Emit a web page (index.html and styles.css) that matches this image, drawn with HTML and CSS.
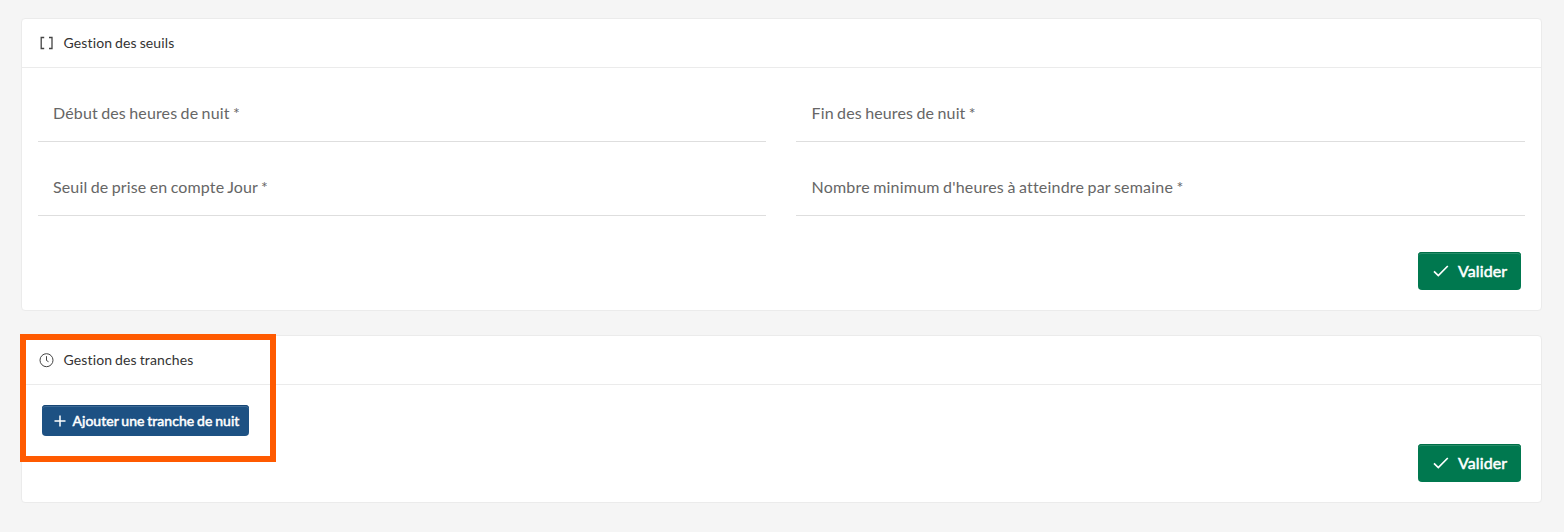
FILE: index.html
```html
<!DOCTYPE html>
<html lang="fr">
<head>
<meta charset="utf-8">
<title>Gestion des seuils</title>
<link rel="stylesheet" href="styles.css">
</head>
<body>
<main class="page">
  <section class="card card-thresholds">
    <header class="card-header">
      <svg class="icon" viewBox="0 0 15 15"><path d="M5.200 1.500H2.200v11h3M10 1.500h3v11h-3"/></svg>
      <span class="title">Gestion des seuils</span>
    </header>
    <div class="fields">
      <label class="field"><span class="field-label">Début des heures de nuit *</span></label>
      <label class="field"><span class="field-label">Fin des heures de nuit *</span></label>
      <label class="field"><span class="field-label">Seuil de prise en compte Jour *</span></label>
      <label class="field"><span class="field-label field-label-long">Nombre minimum d'heures à atteindre par semaine *</span></label>
    </div>
    <div class="actions">
      <button class="btn btn-validate"><svg class="check" viewBox="0 0 16 16"><path d="M1 8.300l4.300 4.200L14.800 3"/></svg><span>Valider</span></button>
    </div>
  </section>
  <section class="card card-ranges">
    <header class="card-header">
      <svg class="icon clock" viewBox="0 0 15 15"><circle cx="7.500" cy="7.200" r="6.500"/><path d="M7.500 3.200v4.300l2 1.200"/></svg>
      <span class="title">Gestion des tranches</span>
    </header>
    <div class="toolbar">
      <button class="btn btn-add"><svg class="plus" viewBox="0 0 12 12"><path d="M6 .5v11M.5 6h11"/></svg><span>Ajouter une tranche de nuit</span></button>
    </div>
    <div class="actions">
      <button class="btn btn-validate"><svg class="check" viewBox="0 0 16 16"><path d="M1 8.300l4.300 4.200L14.800 3"/></svg><span>Valider</span></button>
    </div>
    <div class="highlight"></div>
  </section>
</main>
</body>
</html>
```
FILE: styles.css
```css
* { box-sizing: border-box; }
body {
  margin: 0;
  background: #f5f5f5;
  font-family: Lato, sans-serif;
  font-variant-ligatures: none;
  color: #333;
}
.page {
  height: 532px;
  padding: 18px 22px 0 21px;
  display: flex;
  flex-direction: column;
  gap: 24px;
}
.card {
  position: relative;
  background: #fff;
  border: 1px solid #ebebeb;
  border-radius: 4px;
}
.card-thresholds { height: 293px; }
.card-ranges { height: 168px; }
.card-header {
  height: 49px;
  padding-left: 17px;
  display: flex;
  align-items: center;
  gap: 9.5px;
  border-bottom: 1px solid #ebebeb;
  font-size: 14px;
  letter-spacing: 0.13px;
  word-spacing: -0.8px;
}
.title { padding-bottom: 2px; }
.icon {
  width: 15px;
  height: 15px;
  fill: none;
  stroke: #444;
  stroke-width: 1.3;
}
.clock { stroke-width: 1; }
.fields {
  padding: 0 16px;
  display: grid;
  grid-template-columns: 728px 1fr;
  column-gap: 30px;
}
.field {
  height: 74px;
  padding: 35px 15px 0;
  border-bottom: 1px solid #dedede;
  color: #666;
  font-size: 16px;
  line-height: 20px;
  letter-spacing: 0.14px;
  word-spacing: -0.9px;
}
.field:nth-child(even) { padding-left: 15.5px; }
.field-label { display: block; }
.field-label-long { letter-spacing: 0.2px; }
.actions {
  padding-right: 20px;
  display: flex;
  justify-content: flex-end;
}
.card-thresholds .actions { padding-top: 36px; }
.card-ranges .actions { padding-top: 8px; }
.btn {
  display: flex;
  align-items: center;
  border: 0;
  border-radius: 4px;
  color: #fff;
  font-family: Lato, sans-serif;
  font-variant-ligatures: none;
  font-weight: 400;
  -webkit-text-stroke: 0.5px #fff;
  white-space: nowrap;
}
.btn svg {
  flex: none;
  fill: none;
  stroke: #fff;
}
.btn-validate {
  width: 103px;
  height: 38px;
  padding: 0 0 0 15px;
  gap: 9px;
  background: #00784f;
  box-shadow: inset 0 1px 0 #006f47, inset 0 2px 0 #268c69;
  font-size: 16px;
  letter-spacing: 0.12px;
}
.btn-validate span { padding-bottom: 2px; }
.check {
  width: 16px;
  height: 16px;
  stroke-width: 1.7;
}
.toolbar { padding: 20px 0 0 20px; }
.btn-add {
  width: 207px;
  height: 31px;
  padding: 0 0 0 12px;
  gap: 6.5px;
  background: #1d5183;
  box-shadow: inset 0 1px 0 #174675, inset 0 2px 0 #3e6b96;
  font-size: 14px;
  letter-spacing: 0.04px;
  word-spacing: -0.8px;
}
.plus {
  width: 12px;
  height: 12px;
  stroke-width: 1.5;
}
.highlight {
  position: absolute;
  left: -2px;
  top: -2px;
  width: 256px;
  height: 128px;
  border: 6px solid #ff5a00;
  pointer-events: none;
}
```
